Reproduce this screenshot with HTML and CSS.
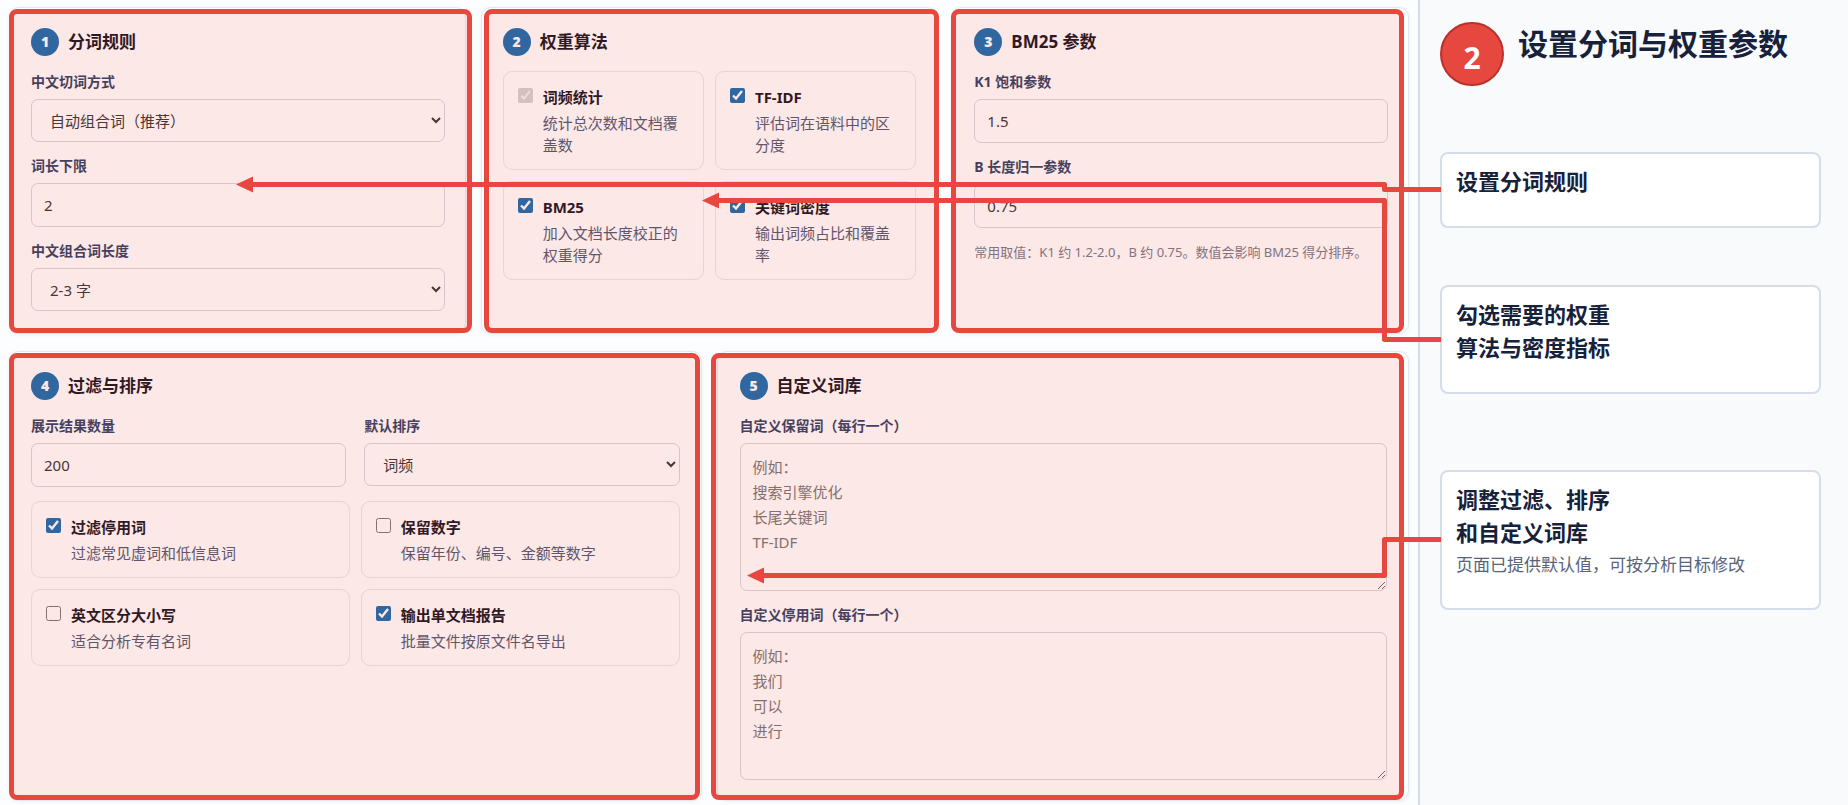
FILE: index.html
```html
<!DOCTYPE html>
<html lang="zh-CN">
<head>
<meta charset="utf-8">
<title>设置分词与权重参数</title>
<link rel="stylesheet" href="styles.css">
</head>
<body>
<div class="page">
  <main class="board">
    <div class="row row-three">
      <section class="card card-rules">
        <h2 class="card-title"><span class="num">1</span>分词规则</h2>
        <div class="fields">
          <div class="field">
            <label for="mode">中文切词方式</label>
            <select id="mode"><option>自动组合词（推荐）</option></select>
          </div>
          <div class="field">
            <label for="minlen">词长下限</label>
            <input id="minlen" type="text" value="2">
          </div>
          <div class="field">
            <label for="gram">中文组合词长度</label>
            <select id="gram"><option>2-3 字</option></select>
          </div>
        </div>
      </section>

      <section class="card card-algos">
        <h2 class="card-title"><span class="num">2</span>权重算法</h2>
        <div class="options">
          <label class="option"><input type="checkbox" checked disabled><span class="option-text"><strong>词频统计</strong><span>统计总次数和文档覆盖数</span></span></label>
          <label class="option"><input type="checkbox" checked><span class="option-text"><strong>TF-IDF</strong><span>评估词在语料中的区分度</span></span></label>
          <label class="option"><input type="checkbox" checked><span class="option-text"><strong>BM25</strong><span>加入文档长度校正的权重得分</span></span></label>
          <label class="option"><input type="checkbox" checked><span class="option-text"><strong>关键词密度</strong><span>输出词频占比和覆盖率</span></span></label>
        </div>
      </section>

      <section class="card card-bm25">
        <h2 class="card-title"><span class="num">3</span>BM25 参数</h2>
        <div class="fields">
          <div class="field">
            <label for="k1">K1 饱和参数</label>
            <input id="k1" type="text" value="1.5">
          </div>
          <div class="field">
            <label for="b">B 长度归一参数</label>
            <input id="b" type="text" value="0.75">
          </div>
          <p class="hint">常用取值：K1 约 1.2-2.0，B 约 0.75。数值会影响 BM25 得分排序。</p>
        </div>
      </section>
    </div>

    <div class="row row-two">
      <section class="card card-filter">
        <h2 class="card-title"><span class="num">4</span>过滤与排序</h2>
        <div class="field-pair">
          <div class="field">
            <label for="limit">展示结果数量</label>
            <input id="limit" type="text" value="200">
          </div>
          <div class="field">
            <label for="sort">默认排序</label>
            <select id="sort"><option>词频</option></select>
          </div>
        </div>
        <div class="options">
          <label class="option"><input type="checkbox" checked><span class="option-text"><strong>过滤停用词</strong><span>过滤常见虚词和低信息词</span></span></label>
          <label class="option"><input type="checkbox"><span class="option-text"><strong>保留数字</strong><span>保留年份、编号、金额等数字</span></span></label>
          <label class="option"><input type="checkbox"><span class="option-text"><strong>英文区分大小写</strong><span>适合分析专有名词</span></span></label>
          <label class="option"><input type="checkbox" checked><span class="option-text"><strong>输出单文档报告</strong><span>批量文件按原文件名导出</span></span></label>
        </div>
      </section>

      <section class="card card-lexicon">
        <h2 class="card-title"><span class="num">5</span>自定义词库</h2>
        <div class="fields">
          <div class="field">
            <label for="keep">自定义保留词（每行一个）</label>
            <textarea id="keep" placeholder="例如：&#10;搜索引擎优化&#10;长尾关键词&#10;TF-IDF"></textarea>
          </div>
          <div class="field">
            <label for="stop">自定义停用词（每行一个）</label>
            <textarea id="stop" placeholder="例如：&#10;我们&#10;可以&#10;进行"></textarea>
          </div>
        </div>
      </section>
    </div>
  </main>

  <aside class="guide">
    <header class="guide-head">
      <span class="step">2</span>
      <h1>设置分词与权重参数</h1>
    </header>
    <article class="note note-rules">
      <h3>设置分词规则</h3>
    </article>
    <article class="note note-algos">
      <h3>勾选需要的权重<br>算法与密度指标</h3>
    </article>
    <article class="note note-lexicon">
      <h3>调整过滤、排序<br>和自定义词库</h3>
      <p>页面已提供默认值，可按分析目标修改</p>
    </article>
  </aside>

  <svg class="connectors" viewBox="0 0 1848 805" preserveAspectRatio="none" aria-hidden="true">
    <polyline points="1441,189.5 1384.5,189.5 1384.5,184.5 250,184.5"/>
    <polygon points="236,184.5 253,176.5 253,192.5"/>
    <polyline points="1441,339.5 1384.5,339.5 1384.5,200.5 716,200.5"/>
    <polygon points="702,200.5 719,192.5 719,208.5"/>
    <polyline points="1441,539.5 1384.5,539.5 1384.5,575.5 761,575.5"/>
    <polygon points="747,575.5 764,567.5 764,583.5"/>
  </svg>
</div>
</body>
</html>
```

FILE: styles.css
```css
* {
  box-sizing: border-box;
}

body {
  margin: 0;
  background: #f9fafc;
  color: #14121f;
  font-family: "Noto Sans", "Noto Sans CJK SC", sans-serif;
  font-size: 15px;
  line-height: 22px;
}

h1, h2, h3, p {
  margin: 0;
}

.page {
  position: relative;
  display: grid;
  grid-template-columns: 1fr 430px;
  min-height: 100vh;
}

.board {
  display: flex;
  flex-direction: column;
  gap: 17px;
  padding: 7px 9px 4px;
  background: #fcfdfe;
}

.row {
  display: grid;
  gap: 15px;
}

.row-three {
  grid-template-columns: repeat(3, minmax(0, 1fr));
}

.row-two {
  grid-template-columns: repeat(2, minmax(0, 1fr));
}

.card {
  position: relative;
  padding: 20px 20px 22px 21px;
  border: 1px solid #e2e8f0;
  border-radius: 10px;
  background: #fff;
  box-shadow: 0 1px 4px rgba(30, 50, 80, 0.06);
}

.row-two .card {
  padding: 20px 21px 20px 21px;
}

.row-two .card-lexicon {
  padding-left: 22px;
}

/* Red highlight laid over each card */
.card::after {
  content: "";
  position: absolute;
  top: 1px;
  bottom: 0;
  border: 5px solid #e6483f;
  border-radius: 8px;
  background: rgba(230, 80, 60, 0.13);
  background-clip: padding-box;
  pointer-events: none;
}

.card-rules::after { left: -1px; right: -7px; }
.card-algos::after { left: 2px; right: -3px; }
.card-bm25::after { left: -2px; right: 4px; }
.card-filter::after { left: -1px; right: 1px; }
.card-lexicon::after { left: -7px; right: 4px; }

.card-title {
  display: flex;
  align-items: center;
  gap: 9px;
  margin-bottom: 15px;
  font-size: 17px;
  line-height: 28px;
  font-weight: 700;
}

.num {
  width: 28px;
  height: 28px;
  border-radius: 50%;
  background: #166baf;
  color: #fff;
  font-size: 14px;
  font-weight: 900;
  text-align: center;
}

.fields {
  display: grid;
  grid-template-columns: minmax(0, 1fr);
  gap: 13px;
}

.field {
  display: grid;
  gap: 6px;
  align-content: start;
}

.field label {
  color: #2f3f66;
  font-size: 14px;
  font-weight: 700;
}

.field input,
.field select,
.field textarea {
  width: 100%;
  border: 1px solid #d3d8e2;
  border-radius: 7px;
  background: #fff;
  color: #333;
  font: inherit;
}

.field input {
  height: 44px;
  padding: 0 12px;
}

.field select {
  height: 43px;
  padding: 0 0 0 14px;
}

.field textarea {
  display: block;
  height: 148px;
  padding: 11px 12px;
  line-height: 25px;
}

.field textarea::placeholder {
  color: #757575;
}

.field-pair {
  display: grid;
  grid-template-columns: 1fr 1fr;
  gap: 18px;
  margin-bottom: 14px;
}

.hint {
  color: #75788a;
  font-size: 13px;
}

.options {
  display: grid;
  grid-template-columns: 1fr 1fr;
  gap: 11px;
}

.option {
  display: flex;
  align-items: flex-start;
  gap: 10px;
  padding: 14px 13px 13px 14px;
  border: 1px solid #e6e9f0;
  border-radius: 9px;
}

.option input {
  flex: none;
  width: 15px;
  height: 15px;
  margin: 2px 0 0;
  accent-color: #166baf;
}

.option-text {
  display: grid;
  gap: 4px;
  color: #4d5773;
}

.option-text strong {
  color: #14121f;
}

.guide {
  padding: 22px 27px 22px 20px;
  border-left: 2px solid #d5dde8;
  background: #f9fafc;
}

.guide-head {
  display: flex;
  align-items: flex-start;
  gap: 14px;
}

.step {
  width: 64px;
  height: 64px;
  padding-top: 12px;
  border: 2px solid #bd2f29;
  border-radius: 50%;
  background: #e6483f;
  color: #fff;
  font-size: 30px;
  line-height: 44px;
  font-weight: 700;
  text-align: center;
}

.guide h1 {
  color: #18213a;
  font-size: 30px;
  line-height: 44px;
  font-weight: 700;
}

.note {
  padding: 11px 14px 28px;
  border: 2px solid #d5dde8;
  border-radius: 8px;
  background: #fff;
}

.note-rules { margin-top: 66px; }
.note-algos { margin-top: 57px; }
.note-lexicon { margin-top: 76px; }

.note h3 {
  color: #18213a;
  font-size: 22px;
  line-height: 33px;
  font-weight: 700;
}

.note p {
  color: #56657b;
  font-size: 17px;
  line-height: 31px;
}

/* Arrows from the notes to the cards */
.connectors {
  position: absolute;
  inset: 0;
  width: 100%;
  height: 100%;
  pointer-events: none;
}

.connectors polyline {
  fill: none;
  stroke: #e6483f;
  stroke-width: 5;
  stroke-linejoin: round;
}

.connectors polygon {
  fill: #e6483f;
}
```
